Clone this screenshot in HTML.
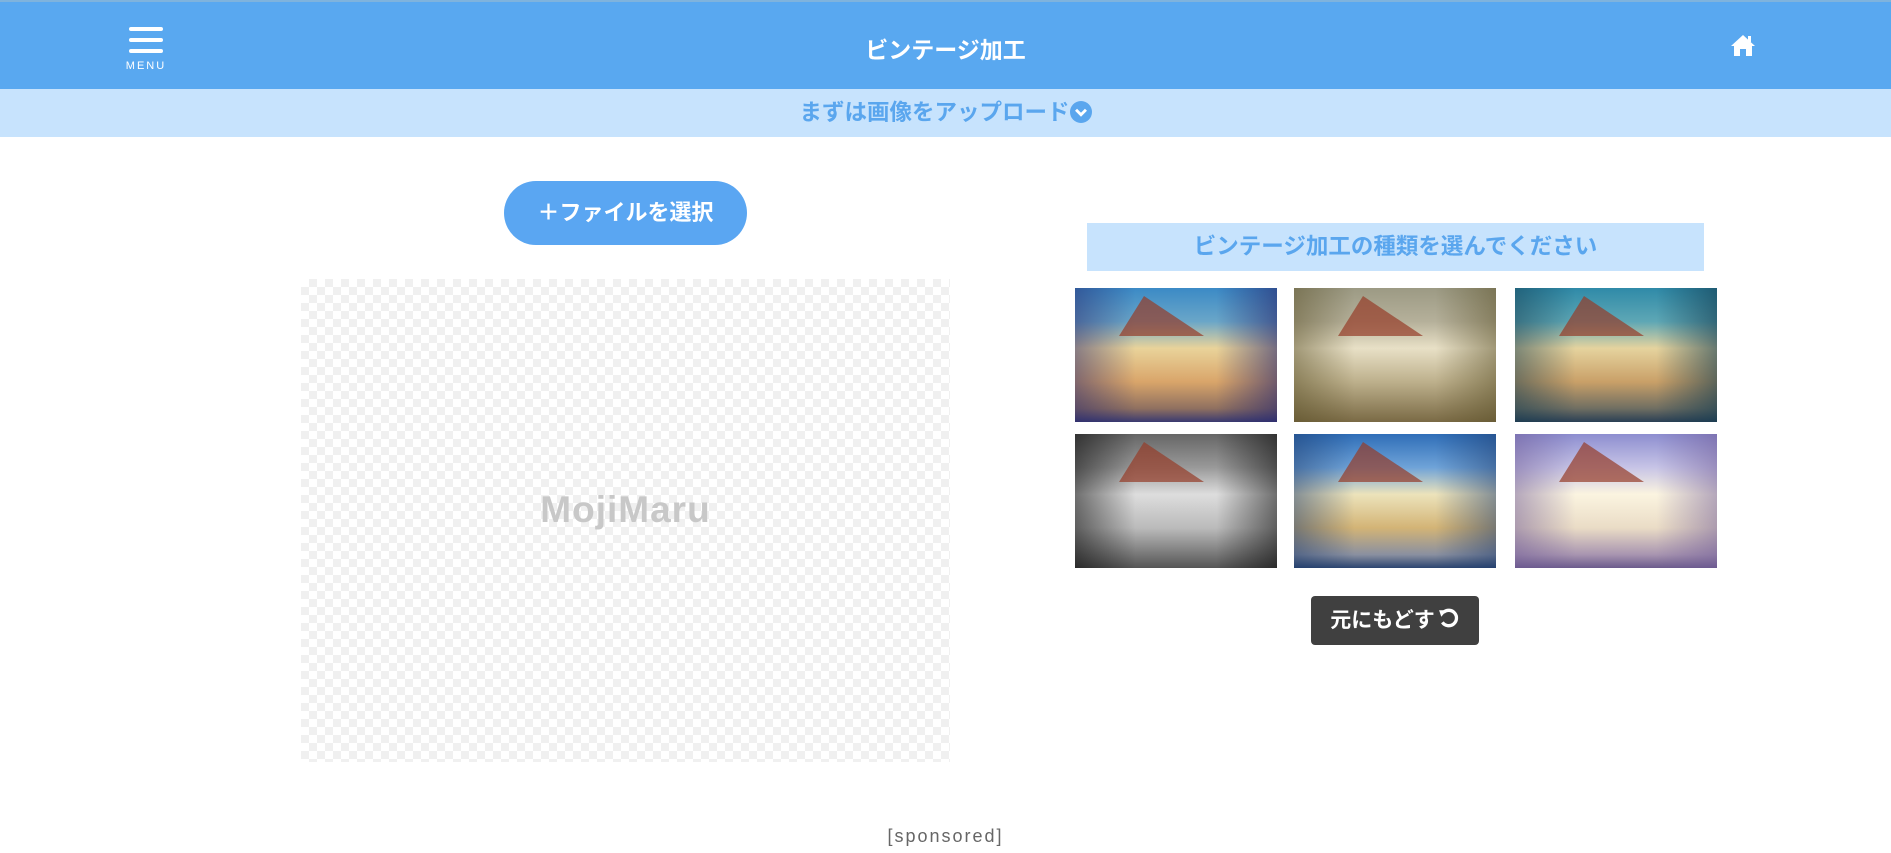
<!DOCTYPE html>
<html><head><meta charset="utf-8"><style>
*{margin:0;padding:0;box-sizing:border-box}
body{width:1891px;height:853px;overflow:hidden;background:#fff;font-family:"Liberation Sans","Noto Sans CJK JP",sans-serif;position:relative}
.hdr{position:absolute;left:0;top:0;width:1891px;height:89px;background:#59a8f0;border-top:2px solid #7fb3dd}
.sub{position:absolute;left:0;top:89px;width:1891px;height:48px;background:#c7e3fd;color:#5aa6ee;font-weight:bold;font-size:22.5px;text-align:center;line-height:48px}
.abs{position:absolute}
.thumb{position:absolute;width:202px;height:134px;overflow:hidden}
.thumb:before{content:"";position:absolute;left:22%;top:6%;width:0;height:0;border-left:25px solid transparent;border-right:60px solid transparent;border-bottom:40px solid rgba(150,60,40,.7)}
</style></head><body>
<div class="hdr"></div>
<div class="abs" style="left:129px;top:27px;width:34px;height:4px;background:#fff;border-radius:2px"></div>
<div class="abs" style="left:129px;top:38px;width:34px;height:4px;background:#fff;border-radius:2px"></div>
<div class="abs" style="left:129px;top:49px;width:34px;height:4px;background:#fff;border-radius:2px"></div>
<div class="abs" style="left:118px;top:60px;width:56px;text-align:center;color:#fff;font-size:11px;letter-spacing:2px">MENU</div>
<div class="abs" style="left:0;width:1891px;top:31px;text-align:center;color:#fff;font-weight:bold;font-size:23px">ビンテージ加工</div>
<svg class="abs" style="left:1730px;top:33px" width="26" height="24" viewBox="0 0 26 24"><path d="M13 2 L1 13 L4 13 L4 23 L10 23 L10 16 L16 16 L16 23 L22 23 L22 13 L25 13 Z" fill="#fff"/><rect x="18" y="3" width="3" height="6" fill="#fff"/></svg>
<div class="sub">まずは画像をアップロード<svg style="vertical-align:-3px" width="22" height="22" viewBox="0 0 20 20"><circle cx="10" cy="10" r="10" fill="#5aa6ee"/><path d="M5.5 8 L10 12.5 L14.5 8" stroke="#fff" stroke-width="2.6" fill="none"/></svg></div>
<div class="abs" style="left:504px;top:181px;width:243px;height:64px;border-radius:32px;background:#5aa6f2;color:#fff;font-weight:bold;font-size:22px;text-align:center;line-height:64px">＋ファイルを選択</div>
<div class="abs" style="left:301px;top:279px;width:649px;height:483px;background-color:#fff;background-image:linear-gradient(45deg,#f0f0f0 25%,transparent 25%,transparent 75%,#f0f0f0 75%),linear-gradient(45deg,#f0f0f0 25%,transparent 25%,transparent 75%,#f0f0f0 75%);background-size:16px 16px;background-position:0 0,8px 8px"></div>
<div class="abs" style="left:301px;width:649px;top:489px;text-align:center;color:#c8c8c8;font-weight:bold;font-size:37px;letter-spacing:1px">MojiMaru</div>
<div class="abs" style="left:1087px;top:223px;width:617px;height:48px;background:#c7e3fd;color:#5aa6ee;font-weight:bold;font-size:22.5px;text-align:center;line-height:48px">ビンテージ加工の種類を選んでください</div>
<div class="thumb" style="left:1075px;top:288px;background:linear-gradient(90deg,rgba(40,40,110,.5),transparent 30%,transparent 70%,rgba(40,40,110,.6)),linear-gradient(180deg,#3b8ac6 0%,#6aa6c8 25%,#e9d39a 45%,#d9a56a 70%,#8f7060 90%,#3a3a70 100%)"></div>
<div class="thumb" style="left:1294px;top:288px;background:linear-gradient(90deg,rgba(90,80,40,.5),transparent 30%,transparent 70%,rgba(90,80,40,.5)),linear-gradient(180deg,#9c9a84 0%,#b5b09a 25%,#e8e0c6 45%,#bdb08c 70%,#7a6a45 100%)"></div>
<div class="thumb" style="left:1515px;top:288px;background:linear-gradient(90deg,rgba(20,60,80,.5),transparent 30%,transparent 70%,rgba(20,60,80,.6)),linear-gradient(180deg,#2f8aa8 0%,#5ea7b5 25%,#e5d39e 45%,#c9a068 70%,#6f6e62 90%,#2a3f55 100%)"></div>
<div class="thumb" style="left:1075px;top:434px;background:linear-gradient(90deg,rgba(0,0,0,.5),transparent 30%,transparent 70%,rgba(0,0,0,.5)),linear-gradient(180deg,#666 0%,#999 25%,#ddd 45%,#bbb 70%,#555 100%)"></div>
<div class="thumb" style="left:1294px;top:434px;background:linear-gradient(90deg,rgba(30,60,110,.5),transparent 30%,transparent 70%,rgba(30,60,110,.5)),linear-gradient(180deg,#2f6eb8 0%,#6fa3d8 25%,#ece3bb 45%,#d3b476 70%,#8a90a0 90%,#2c4570 100%)"></div>
<div class="thumb" style="left:1515px;top:434px;background:linear-gradient(90deg,rgba(110,90,150,.5),transparent 30%,transparent 70%,rgba(110,90,150,.5)),linear-gradient(180deg,#8d8ed0 0%,#c7c4e6 25%,#fbf4e0 45%,#eadcc6 70%,#a895b0 90%,#6c5b8c 100%)"></div>
<div class="abs" style="left:1311px;top:596px;width:168px;height:49px;border-radius:4px;background:#404040;color:#fff;font-weight:bold;font-size:21px;line-height:49px;text-align:center">元にもどす<svg style="vertical-align:-3px;margin-left:3px" width="22" height="22" viewBox="0 0 20 20"><path d="M5 4 A7 7 0 1 1 4 13" stroke="#fff" stroke-width="3" fill="none"/><path d="M1 2 L8 2 L3 8 Z" fill="#fff"/></svg></div>
<div class="abs" style="left:0;width:1891px;top:826px;text-align:center;color:#666;font-size:18px;letter-spacing:2px">[sponsored]</div>
</body></html>
